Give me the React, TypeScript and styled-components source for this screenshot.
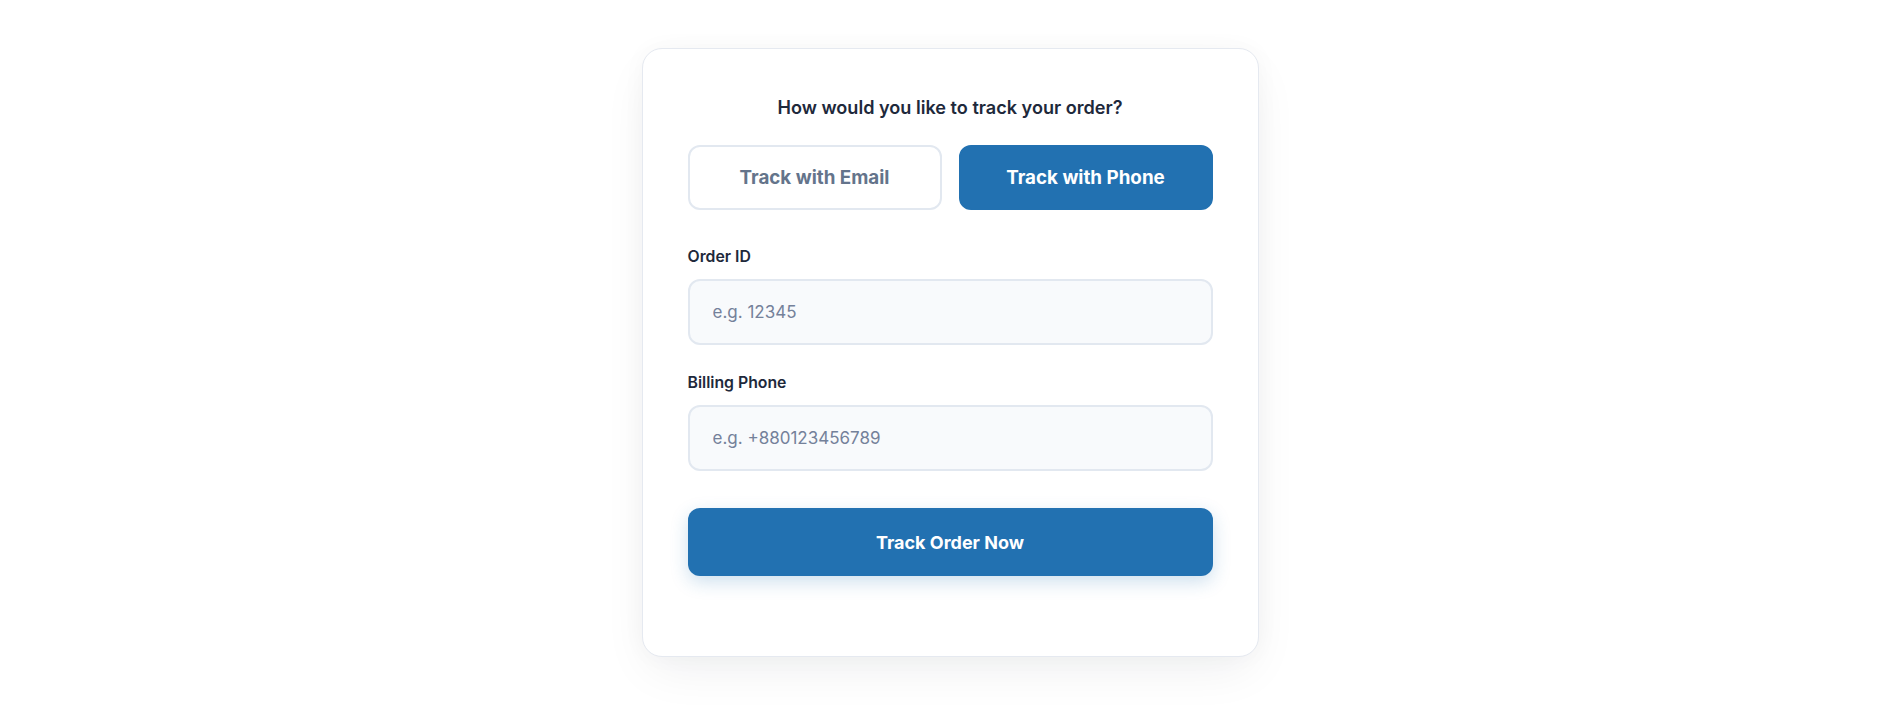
import React, { useState } from "react";
import styled, { createGlobalStyle } from "styled-components";

const GlobalStyle = createGlobalStyle`
  * { box-sizing: border-box; }
  html, body { margin: 0; padding: 0; background: #ffffff; }
  body {
    font-family: Inter, "Noto Sans", "Liberation Sans", sans-serif;
    color: #1e293b;
    -webkit-font-smoothing: antialiased;
  }
`;

const Page = styled.div`
  min-height: 100vh;
  display: flex;
  align-items: center;
  justify-content: center;
`;

const Card = styled.div`
  width: 617px;
  margin-left: 2px;
  background: #ffffff;
  border: 1px solid #e5e9f0;
  border-radius: 20px;
  padding: 44px 45px 80px;
  box-shadow: 0 18px 50px -8px rgba(15, 23, 42, 0.07), 0 0 24px rgba(15, 23, 42, 0.03);
  display: flex;
  flex-direction: column;
`;

const Question = styled.h2`
  margin: 0 0 24px;
  font-size: 18.1px;
  line-height: 28px;
  font-weight: 600;
  text-align: center;
  color: #1e293b;
`;

const Toggle = styled.div`
  display: grid;
  grid-template-columns: 1fr 1fr;
  gap: 17px;
  margin-bottom: 35px;
`;

const ToggleButton = styled.button<{ $active: boolean }>`
  height: 65px;
  border-radius: 12px;
  font-family: inherit;
  font-size: 18.8px;
  font-weight: 700;
  cursor: pointer;
  border: 2px solid ${(p) => (p.$active ? "#2271b1" : "#e2e8f0")};
  background: ${(p) => (p.$active ? "#2271b1" : "#ffffff")};
  color: ${(p) => (p.$active ? "#ffffff" : "#64748b")};
`;

const Field = styled.div`
  display: flex;
  flex-direction: column;
  gap: 10px;
  margin-bottom: 26px;

  &:last-of-type {
    margin-bottom: 37px;
  }
`;

const Label = styled.label`
  font-size: 15.8px;
  line-height: 24px;
  font-weight: 600;
  color: #1e293b;
`;

const Input = styled.input`
  height: 66px;
  width: 100%;
  border: 2px solid #e2e8f0;
  border-radius: 12px;
  background: #f8fafc;
  padding: 0 23px;
  font-family: inherit;
  font-size: 17px;
  color: #1e293b;
  outline: none;

  &::placeholder {
    color: #74819a;
  }
`;

const Submit = styled.button`
  height: 68px;
  width: 100%;
  border: none;
  border-radius: 12px;
  background: #2271b1;
  color: #ffffff;
  font-family: inherit;
  font-size: 18px;
  font-weight: 700;
  cursor: pointer;
  box-shadow: 0 6px 18px rgba(34, 113, 177, 0.22);
`;

export default function App() {
  const [mode, setMode] = useState<"email" | "phone">("phone");

  return (
    <>
      <GlobalStyle />
      <Page>
        <Card>
          <Question>How would you like to track your order?</Question>
          <Toggle>
            <ToggleButton $active={mode === "email"} onClick={() => setMode("email")}>
              Track with Email
            </ToggleButton>
            <ToggleButton $active={mode === "phone"} onClick={() => setMode("phone")}>
              Track with Phone
            </ToggleButton>
          </Toggle>
          <Field>
            <Label>Order ID</Label>
            <Input placeholder="e.g. 12345" />
          </Field>
          {mode === "phone" ? (
            <Field>
              <Label>Billing Phone</Label>
              <Input placeholder="e.g. +880123456789" />
            </Field>
          ) : (
            <Field>
              <Label>Billing Email</Label>
              <Input placeholder="e.g. name@example.com" />
            </Field>
          )}
          <Submit>Track Order Now</Submit>
        </Card>
      </Page>
    </>
  );
}
